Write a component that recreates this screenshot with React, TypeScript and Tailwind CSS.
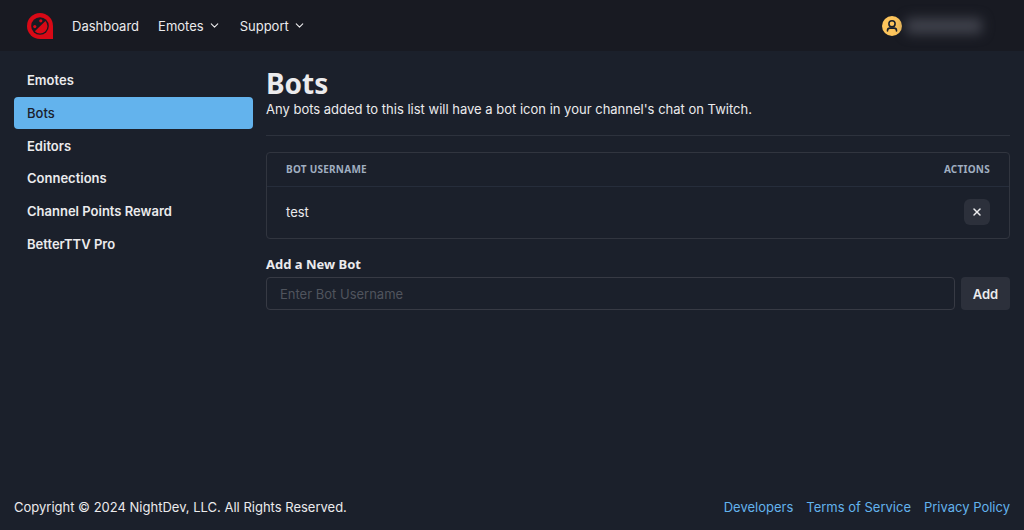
import { useState } from 'react';
import type { FormEvent } from 'react';
import { FiChevronDown, FiX } from 'react-icons/fi';

const MENUS = ['Emotes', 'Support'];

const SECTIONS = ['Emotes', 'Bots', 'Editors', 'Connections', 'Channel Points Reward', 'BetterTTV Pro'];

const FOOTER_LINKS = ['Developers', 'Terms of Service', 'Privacy Policy'];

function Logo() {
  return (
    <svg viewBox="0 0 26 26" className="w-[26px] h-[26px]" aria-hidden="true">
      <path d="M13 0a13 13 0 0 1 13 13v13H13A13 13 0 0 1 13 0Z" fill="#d80916" />
      <circle cx="13" cy="13" r="8.8" fill="#181a22" />
      <path d="M18.4 8a7.2 7.2 0 0 1-10.6 10.2Z" fill="#d80916" />
      <circle cx="13.8" cy="7.8" r="1.6" fill="#d80916" />
      <circle cx="7.8" cy="13.6" r="1.6" fill="#d80916" />
    </svg>
  );
}

function Avatar() {
  return (
    <svg viewBox="0 0 20 20" className="w-5 h-5" aria-hidden="true">
      <circle cx="10" cy="10" r="10" fill="#fdc55c" />
      <g fill="none" stroke="#1a202c" strokeWidth="1.6" strokeLinecap="round">
        <circle cx="10" cy="7.8" r="3.1" />
        <path d="M5.5 15v-.6a2.3 2.3 0 0 1 2.3-2.3h4.4a2.3 2.3 0 0 1 2.3 2.3v.6" />
      </g>
    </svg>
  );
}

export default function App() {
  const [bots, setBots] = useState<string[]>(['test']);
  const [name, setName] = useState('');

  const addBot = (e: FormEvent) => {
    e.preventDefault();
    if (!name.trim()) return;
    setBots([...bots, name.trim()]);
    setName('');
  };

  return (
    <div className="min-h-screen flex flex-col bg-[#1b202b] text-[#ebebed] text-[13px] leading-5 font-['Inter',sans-serif]">

      {/* ── Top bar ── */}
      <header className="h-[51px] bg-[#181a22] flex items-center justify-between pl-[27px] pr-[34px]">
        <nav className="flex items-center gap-[19px]">
          <a href="#home" aria-label="Home"><Logo /></a>
          <a href="#dashboard">Dashboard</a>
          {MENUS.map(menu => (
            <button key={menu} className="flex items-center gap-1">
              {menu}
              <FiChevronDown className="w-[13px] h-[13px]" />
            </button>
          ))}
        </nav>
        <button aria-label="Account" className="flex items-center gap-1">
          <Avatar />
          <span className="w-[84px] h-5 flex items-center">
            <span className="w-[76px] h-4 rounded bg-[#3f414b] blur-[6px]" />
          </span>
        </button>
      </header>

      <div className="flex-1 flex gap-[13px] px-[14px] pt-[13px]">

        {/* ── Sidebar ── */}
        <nav className="w-[239px] h-[196px] shrink-0 grid auto-rows-fr">
          {SECTIONS.map(section => (
            <a key={section} href={`#${section}`}
              className={section === 'Bots'
                ? 'flex items-center px-[13px] rounded bg-[#63b3ed] text-[#1a202c] font-medium'
                : 'flex items-center px-[13px] rounded font-semibold'}>
              {section}
            </a>
          ))}
        </nav>

        {/* ── Bot list ── */}
        <main className="flex-1 min-w-0 pt-1">
          <h1 className="text-[28px] leading-[31px] font-bold font-['Noto_Sans',sans-serif]">Bots</h1>
          <p>Any bots added to this list will have a bot icon in your channel's chat on Twitch.</p>
          <hr className="my-4 border-[#2d323d]" />

          <div className="border border-[#31353f] rounded">
            <table className="w-full">
              <thead>
                <tr className="h-[33px] border-b border-[#262d3b] text-[10px] text-[#a0aec0] uppercase font-['Noto_Sans',sans-serif]">
                  <th className="px-[19px] text-left font-bold tracking-wide">Bot Username</th>
                  <th className="px-[19px] text-right font-bold tracking-wide">Actions</th>
                </tr>
              </thead>
              <tbody>
                {bots.map(bot => (
                  <tr key={bot} className="h-[52px]">
                    <td className="px-[19px]">{bot}</td>
                    <td className="px-[19px]">
                      <button aria-label={`Remove ${bot}`}
                        onClick={() => setBots(bots.filter(b => b !== bot))}
                        className="ml-auto w-[26px] h-[26px] rounded-md bg-[#2c303b] flex items-center justify-center">
                        <FiX className="w-3 h-3" strokeWidth={3} />
                      </button>
                    </td>
                  </tr>
                ))}
              </tbody>
            </table>
          </div>

          <form onSubmit={addBot} className="mt-4">
            <label htmlFor="bot-name" className="block leading-[18px] font-bold font-['Noto_Sans',sans-serif]">Add a New Bot</label>
            <div className="mt-1 flex gap-[6px]">
              <input id="bot-name" value={name} onChange={e => setName(e.target.value)}
                placeholder="Enter Bot Username"
                className="flex-1 min-w-0 h-[33px] px-[13px] rounded border border-[#373a44] bg-transparent placeholder:text-[#50545d]" />
              <button type="submit" className="w-[49px] h-[33px] rounded bg-[#2c303b] font-semibold">Add</button>
            </div>
          </form>
        </main>
      </div>

      {/* ── Footer ── */}
      <footer className="flex items-center justify-between px-[14px] pb-[13px]">
        <p>Copyright © 2024 NightDev, LLC. All Rights Reserved.</p>
        <nav className="flex gap-[13px] text-[#63b3ed]">
          {FOOTER_LINKS.map(link => <a key={link} href={`#${link}`}>{link}</a>)}
        </nav>
      </footer>

    </div>
  );
}
